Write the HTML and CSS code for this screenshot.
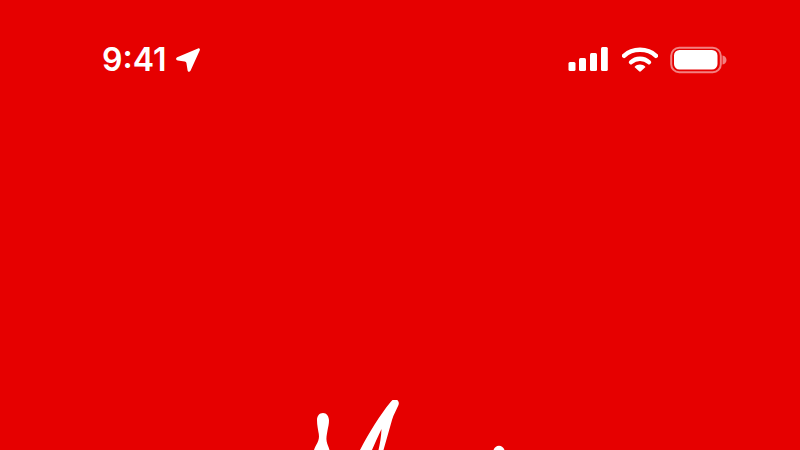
FILE: index.html
```html
<!DOCTYPE html>
<html lang="en">
<head>
<meta charset="utf-8">
<title>Splash</title>
<link rel="stylesheet" href="styles.css">
</head>
<body>
<div class="screen">
  <header class="status-bar">
    <div class="status-left">
      <span class="time">9:41</span>
      <svg class="location" viewBox="0 0 26 28" width="26" height="28"><path d="M2.200 11.300 23 2.500c1.300-.5 2.300.5 1.800 1.800L15.500 24.700c-.8 1.600-2.600 1.400-2.900-.3l-1.200-7.300c-.2-1-.7-1.500-1.700-1.600l-7-1c-1.900-.3-2.200-2.400-.5-3.200z" fill="#fff"/></svg>
    </div>
    <div class="status-right">
      <svg class="signal" viewBox="0 0 40 28" width="40" height="28"><rect x="0.500" y="16" width="7" height="9" rx="1.500" fill="#fff"/><rect x="11" y="12" width="7" height="13" rx="1.500" fill="#fff"/><rect x="22" y="7" width="7" height="18" rx="1.500" fill="#fff"/><rect x="33" y="1" width="6.800" height="24" rx="1.500" fill="#fff"/></svg>
      <svg class="wifi" viewBox="0 0 36 28" width="36" height="28"><path d="M2 9.800C10.500 1.800 25.500 1.800 34 9.800" fill="none" stroke="#fff" stroke-width="4.400" stroke-linecap="round"/><path d="M9 16.300C13.800 11.500 22.200 11.500 27 16.300" fill="none" stroke="#fff" stroke-width="4.400" stroke-linecap="round"/><path d="M12.500 21c3-3.200 8-3.200 11 0l-4.600 4.300c-.5.500-1.300.5-1.800 0z" fill="#fff"/></svg>
      <svg class="battery" viewBox="0 0 58 28" width="58" height="28"><rect x="1.200" y="1.800" width="49.600" height="24.400" rx="8" fill="none" stroke="#fff" stroke-opacity=".5" stroke-width="2"/><rect x="4" y="4" width="43.500" height="19.500" rx="5.500" fill="#fff"/><path d="M52.500 9.500c2.500.4 4 2.300 4 4.500s-1.500 4.100-4 4.500z" fill="#fff" fill-opacity=".5"/></svg>
    </div>
  </header>
  <main class="hero">
    <svg class="logo" viewBox="0 0 240 50" width="240" height="50">
      <path d="M33 13c-3.600 0-6 2.800-6 7 0 5.500 1.200 10 1.800 14 .5 3.500 0 5.800-1.500 9-1.300 2.500-2.600 4.800-3.300 7h15.500c-.8-3-2.200-5.500-2.800-8.500-.7-3.300 0-6.500.8-11 .7-3.800 1.500-6.500 1.500-10 0-4-2.400-7.500-6-7.500z" fill="#fff"/>
      <path d="M104.500-.800c-1.800.2-3 1.600-4.500 3.600C90 15 79 33 70 50h12c3-7 6.200-14 9.500-21-.3 7.500-1.500 14.500-3 21h5c3-10 5.500-20 8.500-30 1.600-5.300 4.300-10 6.500-15 1.200-3-1-6.100-4-5.800z" fill="#fff"/>
      <path d="M203.500 50c.8-2.500 3-4.200 5.500-4.200s4.700 1.700 5.500 4.200z" fill="#fff"/>
    </svg>
  </main>
</div>
</body>
</html>
```

FILE: styles.css
```css
html, body {
  margin: 0;
  padding: 0;
}

.screen {
  width: 800px;
  height: 450px;
  overflow: hidden;
  background: #e60000;
  display: flex;
  flex-direction: column;
  font-family: "Inter", "Liberation Sans", sans-serif;
  color: #fff;
}

.status-bar {
  display: flex;
  justify-content: space-between;
  align-items: center;
  height: 28px;
  margin-top: 46px;
  padding: 0 72px 0 102px;
}

.status-left {
  display: flex;
  align-items: center;
  gap: 8px;
}

.time {
  font-size: 32px;
  font-weight: 600;
  line-height: 28px;
}

.status-right {
  display: flex;
  align-items: center;
  gap: 12px;
}

.status-right .signal {
  margin-right: 2px;
}

.location,
.signal,
.wifi,
.battery {
  display: block;
}

.hero {
  flex: 1;
  display: flex;
  align-items: flex-end;
  padding-left: 290px;
}

.logo {
  display: block;
}
```
